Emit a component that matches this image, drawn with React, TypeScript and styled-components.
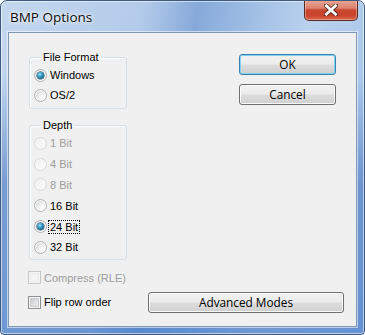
import React from "react";
import styled, { createGlobalStyle, css } from "styled-components";

const Global = createGlobalStyle`
  html, body { margin: 0; padding: 0; background: #ffffff; }
  * { box-sizing: border-box; }
`;

const Window = styled.div`
  width: 365px;
  height: 335px;
  border: 1px solid #3d5a80;
  border-radius: 7px 7px 4px 4px;
  display: flex;
  flex-direction: column;
  overflow: hidden;
  background:
    linear-gradient(to bottom, rgba(255,255,255,0) 0%, rgba(255,255,255,0) 22%, rgba(50,100,180,0.5) 55%, rgba(60,115,195,0.6) 100%),
    linear-gradient(100deg, #c3d7ef 0%, #b3cbea 34%, #86a9da 47%, #98b8e1 56%, #bad1ee 74%, #a4c2e8 100%);
  box-shadow: inset 0 0 0 1px rgba(255,255,255,0.55);
`;

const TitleBar = styled.div`
  height: 31px;
  display: flex;
  justify-content: space-between;
  align-items: flex-start;
  padding-left: 9px;
  padding-right: 6px;
`;

const Title = styled.div`
  font-family: "Open Sans", "Noto Sans", sans-serif;
  font-size: 13.5px;
  line-height: 18px;
  margin-top: 7px;
  color: #0c0c0c;
  text-shadow: 0 0 6px rgba(255,255,255,0.95), 0 0 3px rgba(255,255,255,0.9);
`;

const CloseButton = styled.div`
  width: 54px;
  height: 21px;
  margin-top: -1px;
  border: 1px solid #5a2b25;
  border-top: none;
  border-radius: 0 0 5px 5px;
  background: linear-gradient(to bottom, #e9a897 0%, #dc8470 40%, #c9462f 50%, #c8432b 75%, #d9664a 100%);
  box-shadow: inset 0 0 0 1px rgba(255,210,200,0.45);
  display: flex;
  align-items: center;
  justify-content: center;
`;

const Client = styled.div`
  flex: 1;
  margin: 0 7px 7px 7px;
  border: 1px solid #8098b8;
  box-shadow: 0 0 0 1px rgba(255,255,255,0.55);
  background: #f0f0f0;
  padding: 18px 20px 0 20px;
  display: flex;
  flex-direction: column;
  font-family: "Liberation Sans", Arial, sans-serif;
  font-size: 11px;
  color: #000;
`;

const TopSection = styled.div`
  display: flex;
  justify-content: space-between;
  align-items: flex-start;
`;

const LeftColumn = styled.div`
  width: 98px;
  display: flex;
  flex-direction: column;
  gap: 10px;
`;

const RightColumn = styled.div`
  width: 97px;
  margin-top: 3px;
  display: flex;
  flex-direction: column;
  gap: 9px;
`;

const Group = styled.fieldset<{ $rowHeight: number; $padTop: number; $padBottom: number }>`
  margin: 0;
  padding: ${(p) => `${p.$padTop}px 4px ${p.$padBottom}px 4px`};
  border: 1px solid #d5dfe5;
  border-radius: 3px;
  min-width: 0;
  box-shadow: inset 1px 1px 0 #ffffff;
  display: flex;
  flex-direction: column;
  --row: ${(p) => p.$rowHeight}px;
`;

const Legend = styled.legend`
  margin-left: 7px;
  padding: 0 2px;
  font-size: 11px;
  line-height: 13px;
  color: #000;
`;

const OptionRow = styled.div`
  height: var(--row, 20px);
  display: flex;
  align-items: center;
  gap: 2px;
`;

const RadioCircle = styled.span<{ $checked?: boolean; $disabled?: boolean }>`
  position: relative;
  width: 13px;
  height: 13px;
  border-radius: 50%;
  flex: none;
  border: 1px solid ${(p) => (p.$disabled ? "#d6d8da" : "#b0b3b6")};
  background: ${(p) =>
    p.$disabled
      ? "linear-gradient(135deg, #efefef, #fbfbfb)"
      : "radial-gradient(circle at 68% 72%, #ffffff 0%, #f3f3f3 30%, #d0d2d4 85%, #c4c6c8 100%)"};
  box-shadow: inset 0 0 0 1px ${(p) => (p.$disabled ? "#f8f8f8" : "rgba(255,255,255,0.85)")};
  ${(p) =>
    p.$checked &&
    css`
      &::after {
        content: "";
        position: absolute;
        left: 2px;
        top: 2px;
        width: 7px;
        height: 7px;
        border-radius: 50%;
        background: radial-gradient(circle at 40% 35%, #a8e4fb 0%, #3aa0d0 35%, #145876 80%, #0f3f57 100%);
        box-shadow: 0 0 0 0.5px #2b5068;
      }
    `}
`;

const OptionText = styled.span<{ $disabled?: boolean; $focused?: boolean }>`
  padding: 0 1px;
  line-height: 12px;
  color: ${(p) => (p.$disabled ? "#9d9d9d" : "#000")};
  outline: ${(p) => (p.$focused ? "1px dotted #000" : "none")};
  outline-offset: 0px;
`;

const CheckBoxBox = styled.span<{ $disabled?: boolean }>`
  width: 13px;
  height: 13px;
  flex: none;
  border: 1px solid ${(p) => (p.$disabled ? "#c6c8ca" : "#8e8f8f")};
  background: ${(p) =>
    p.$disabled
      ? "#f4f4f4"
      : "linear-gradient(135deg, #b4b8bc 0%, #dadcde 45%, #f2f2f2 100%)"};
  box-shadow: inset 0 0 0 1px #f6f6f6, inset 0 0 0 2px ${(p) => (p.$disabled ? "#ececec" : "#c9cbcd")};
`;

const CheckRow = styled.div<{ $height: number }>`
  height: ${(p) => p.$height}px;
  display: flex;
  align-items: center;
  gap: 2px;
  margin-left: -1px;
`;

const Button = styled.button<{ $default?: boolean; $width?: number }>`
  width: ${(p) => (p.$width ? `${p.$width}px` : "100%")};
  height: 21px;
  padding: 0;
  border-radius: 3px;
  font-family: "Open Sans", "Noto Sans", sans-serif;
  font-size: 11.8px;
  line-height: 19px;
  color: #000;
  border: 1px solid ${(p) => (p.$default ? "#3c7fb1" : "#707070")};
  background: linear-gradient(to bottom, #f2f2f2 0%, #ebebeb 48%, #dddddd 52%, #cfcfcf 100%);
  box-shadow: inset 0 0 0 1px ${(p) => (p.$default ? "#7fd3f2" : "#fbfbfb")};
  text-align: center;
`;

const BottomArea = styled.div`
  margin-top: 8px;
  display: flex;
  flex-direction: column;
  gap: 4px;
`;

const BottomRow = styled.div`
  display: flex;
  align-items: center;
  justify-content: space-between;
  margin-right: -8px;
`;

function CloseGlyph() {
  return (
    <svg width="14" height="12" viewBox="0 0 14 12">
      <path
        d="M2 1.5 L12 10.5 M12 1.5 L2 10.5"
        stroke="#3b1410"
        strokeWidth="4.6"
        strokeLinecap="round"
        fill="none"
        opacity="0.75"
      />
      <path
        d="M2.4 1.8 L11.6 10.2 M11.6 1.8 L2.4 10.2"
        stroke="#ffffff"
        strokeWidth="2.8"
        strokeLinecap="square"
        fill="none"
      />
    </svg>
  );
}

type Opt = { label: string; checked?: boolean; disabled?: boolean; focused?: boolean };

function Radio({ label, checked, disabled, focused }: Opt) {
  return (
    <OptionRow>
      <RadioCircle $checked={checked} $disabled={disabled} />
      <OptionText $disabled={disabled} $focused={focused}>
        {label}
      </OptionText>
    </OptionRow>
  );
}

const formats: Opt[] = [{ label: "Windows", checked: true }, { label: "OS/2" }];

const depths: Opt[] = [
  { label: "1 Bit", disabled: true },
  { label: "4 Bit", disabled: true },
  { label: "8 Bit", disabled: true },
  { label: "16 Bit" },
  { label: "24 Bit", checked: true, focused: true },
  { label: "32 Bit" },
];

export default function App() {
  return (
    <>
      <Global />
      <Window>
        <TitleBar>
          <Title>BMP Options</Title>
          <CloseButton>
            <CloseGlyph />
          </CloseButton>
        </TitleBar>
        <Client>
          <TopSection>
            <LeftColumn>
              <Group $rowHeight={20} $padTop={1} $padBottom={3}>
                <Legend>File Format</Legend>
                {formats.map((o) => (
                  <Radio key={o.label} {...o} />
                ))}
              </Group>
              <Group $rowHeight={20.8} $padTop={1} $padBottom={1}>
                <Legend>Depth</Legend>
                {depths.map((o) => (
                  <Radio key={o.label} {...o} />
                ))}
              </Group>
            </LeftColumn>
            <RightColumn>
              <Button $default>OK</Button>
              <Button>Cancel</Button>
            </RightColumn>
          </TopSection>
          <BottomArea>
            <CheckRow $height={20}>
              <CheckBoxBox $disabled />
              <OptionText $disabled>Compress (RLE)</OptionText>
            </CheckRow>
            <BottomRow>
              <CheckRow $height={21}>
                <CheckBoxBox />
                <OptionText>Flip row order</OptionText>
              </CheckRow>
              <Button $width={196}>Advanced Modes</Button>
            </BottomRow>
          </BottomArea>
        </Client>
      </Window>
    </>
  );
}
